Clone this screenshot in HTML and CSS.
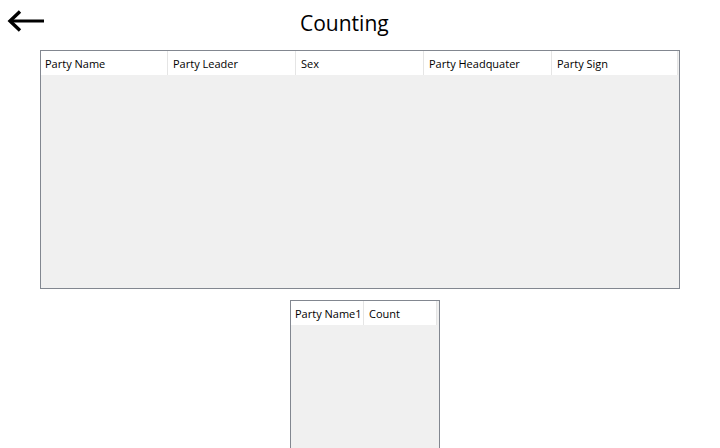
FILE: index.html
```html
<!DOCTYPE html>
<html>
<head>
<meta charset="utf-8">
<link rel="stylesheet" href="styles.css">
</head>
<body>
<div class="top">
  <svg class="back" width="38" height="22" viewBox="0 0 38 22">
    <path d="M13 1.5 L3 11 L13 20.5" fill="none" stroke="#000" stroke-width="3.4" stroke-linejoin="miter"/>
    <path d="M3.5 11 H37" fill="none" stroke="#000" stroke-width="3.2"/>
  </svg>
  <h1 class="title">Counting</h1>
</div>
<div class="grid big">
  <div class="head">
    <div class="col c1">Party Name</div>
    <div class="col c2">Party Leader</div>
    <div class="col c2">Sex</div>
    <div class="col c2">Party Headquater</div>
    <div class="col c3">Party Sign</div>
  </div>
</div>
<div class="grid small">
  <div class="head">
    <div class="col w2">Party Name1</div>
    <div class="col w2">Count</div>
  </div>
</div>
</body>
</html>
```
FILE: styles.css
```css
html, body {
  margin: 0;
  padding: 0;
  background: #fff;
  font-family: "Open Sans", "Noto Sans", sans-serif;
  overflow: hidden;
}
body { width: 720px; height: 448px; }
.top {
  position: relative;
  height: 50px;
}
.back {
  position: absolute;
  left: 7px;
  top: 10px;
}
.title {
  margin: 0;
  padding-top: 8px;
  padding-left: 300px;
  font-size: 21px;
  font-weight: 400;
  line-height: 30px;
  color: #000;
}
.grid {
  box-sizing: border-box;
  border: 1px solid #828790;
  background: #f0f0f0;
}
.big {
  margin-left: 40px;
  width: 640px;
  height: 239px;
}
.small {
  margin-left: 290px;
  margin-top: 11px;
  width: 150px;
  height: 160px;
}
.head {
  display: flex;
  height: 24px;
}
.col {
  box-sizing: border-box;
  flex: none;
  background: #fff;
  border-right: 1px solid #e5e5e5;
  font-size: 11px;
  line-height: 24px;
  padding-top: 1px;
  padding-left: 5px;
  color: #000;
  white-space: nowrap;
  overflow: hidden;
}
.c1 { width: 127px; padding-left: 4px; }
.c2 { width: 128px; }
.c3 { width: 126px; }
.w2 { width: 73px; }
.w2:first-child { padding-left: 4px; }
```
